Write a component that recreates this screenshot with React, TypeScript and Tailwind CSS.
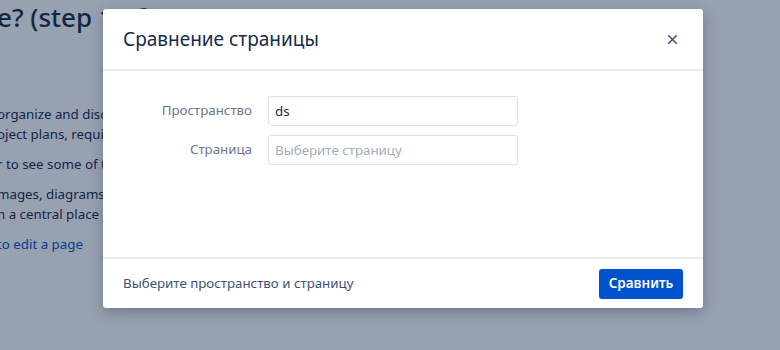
import React from "react";
import { X } from "lucide-react";

const font = { fontFamily: '"Noto Sans", "Open Sans", sans-serif' };

function PageBehind() {
  return (
    <div className="ml-[-3px] text-[#172b4d]">
      <h1 className="text-[26px] font-medium leading-[30px] pt-[2px] whitespace-nowrap">
        e? (step 1 of 9)
      </h1>
      <div className="mt-[72px] text-[13.3px] leading-[20px] whitespace-nowrap">
        <p>organize and discuss work with your team</p>
        <p>oject plans, requirements and meeting notes</p>
        <p className="mt-[10px]">r to see some of the features</p>
        <p className="mt-[10px]">mages, diagrams, files and more</p>
        <p>n a central place</p>
        <p className="mt-[10px] text-[#0052cc]">to edit a page</p>
      </div>
    </div>
  );
}

function Field({
  label,
  value,
  placeholder,
}: {
  label: string;
  value?: string;
  placeholder?: string;
}) {
  return (
    <div className="flex items-center gap-4">
      <label className="w-[129px] text-right text-[13.3px] text-[#6b778c]">
        {label}
      </label>
      <input
        readOnly
        value={value}
        placeholder={placeholder}
        className="w-[250px] h-[30px] rounded-[3px] border border-[#dfe1e6] bg-white px-[6px] text-[13.3px] text-[#172b4d] placeholder:text-[#a5adba] outline-none"
      />
    </div>
  );
}

export default function App() {
  return (
    <div
      className="relative w-[780px] h-[350px] overflow-hidden bg-white"
      style={font}
    >
      <PageBehind />
      <div className="absolute inset-0 bg-[rgba(9,30,66,0.42)]" />
      <div className="absolute left-[103px] top-[9px] w-[600px] rounded-[3px] bg-white shadow-[0_4px_14px_rgba(9,30,66,0.3)] flex flex-col">
        <div className="h-[62px] flex items-center justify-between pl-5 pr-[23px] border-b-2 border-[#ebecf0]">
          <h2 className="text-[19px] text-[#172b4d] leading-none">
            Сравнение страницы
          </h2>
          <X size={15} strokeWidth={2.5} className="text-[#42526e]" />
        </div>
        <div className="h-[186px] px-5 pt-[25px] flex flex-col gap-[9px]">
          <Field label="Пространство" value="ds" />
          <Field label="Страница" placeholder="Выберите страницу" />
        </div>
        <div className="h-[51px] border-t-2 border-[#ebecf0] flex items-center justify-between px-5">
          <span className="text-[13.3px] text-[#42526e]">
            Выберите пространство и страницу
          </span>
          <button className="h-[30px] w-[84px] rounded-[3px] bg-[#0052cc] text-white text-[13.5px] font-semibold">
            Сравнить
          </button>
        </div>
      </div>
    </div>
  );
}
